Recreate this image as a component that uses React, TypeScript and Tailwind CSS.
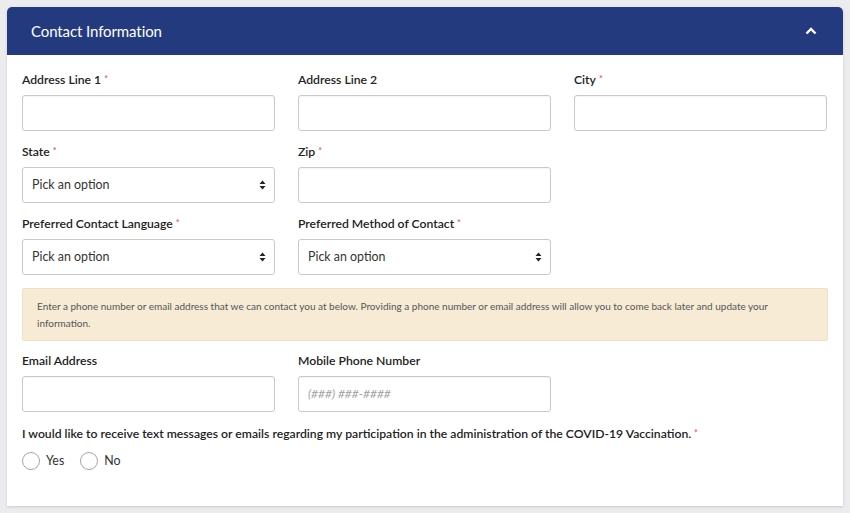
import React from "react";

const font = { fontFamily: "Lato, 'Noto Sans', sans-serif" };

function Req() {
  return <span className="text-[#e05a5a] text-[9px] align-top ml-[3px] relative top-[-1px]">*</span>;
}

function Label({ children, req }: { children: React.ReactNode; req?: boolean }) {
  return (
    <div className="h-[16px] text-[12.2px] leading-[16px] font-semibold text-[#222] mb-[7px] whitespace-nowrap">
      {children}
      {req && <Req />}
    </div>
  );
}

function Input({ placeholder }: { placeholder?: string }) {
  return (
    <div className="h-[36px] rounded-[3px] border border-[#c9c9c9] bg-white flex items-center px-[9px] shadow-[inset_0_1px_1px_rgba(0,0,0,0.04)]">
      {placeholder && <span className="text-[12px] italic text-[#a0a0a0]">{placeholder}</span>}
    </div>
  );
}

function Select() {
  return (
    <div className="h-[36px] rounded-[3px] border border-[#c9c9c9] bg-white flex items-center justify-between pl-[9px] pr-[8px]">
      <span className="text-[12.4px] text-[#333]">Pick an option</span>
      <svg width="7" height="10" viewBox="0 0 7 10">
        <path d="M3.5 0.5 L6.5 4 H0.5 Z" fill="#222" />
        <path d="M3.5 9.5 L6.5 6 H0.5 Z" fill="#222" />
      </svg>
    </div>
  );
}

function Field({ label, req, children }: { label: string; req?: boolean; children: React.ReactNode }) {
  return (
    <div className="flex flex-col">
      <Label req={req}>{label}</Label>
      {children}
    </div>
  );
}

function Radio({ label }: { label: string }) {
  return (
    <div className="flex items-center gap-[6px]">
      <div className="w-[18px] h-[18px] rounded-full border border-[#a5a5a5] bg-white" />
      <span className="text-[12.4px] text-[#333]">{label}</span>
    </div>
  );
}

export default function App() {
  return (
    <div className="w-[850px] h-[513px] bg-[#ececef] pt-[7px] pl-[7px] pr-[7px]" style={font}>
      <div className="bg-white rounded-t-[5px] shadow-[0_1px_3px_rgba(0,0,0,0.15)] h-[499px]">
        <div className="h-[48px] bg-[#233a7f] rounded-t-[5px] flex items-center justify-between pl-[24px] pr-[26px]">
          <span className="text-white text-[15px] tracking-[-0.1px]">Contact Information</span>
          <svg width="12" height="8" viewBox="0 0 12 8">
            <path d="M1.5 6.5 L6 2 L10.5 6.5" stroke="white" strokeWidth="2.4" fill="none" />
          </svg>
        </div>
        <div className="px-[15px] pt-[17px]">
          <div className="grid grid-cols-[253px_253px_253px] gap-x-[23px] gap-y-[13px]">
            <Field label="Address Line 1" req><Input /></Field>
            <Field label="Address Line 2"><Input /></Field>
            <Field label="City" req><Input /></Field>
            <Field label="State" req><Select /></Field>
            <Field label="Zip" req><Input /></Field>
            <div />
            <Field label="Preferred Contact Language" req><Select /></Field>
            <Field label="Preferred Method of Contact" req><Select /></Field>
            <div />
          </div>
          <div className="mt-[13px] h-[53px] bg-[#f7ebd6] border border-[#efe1c6] rounded-[2px] pl-[14px] pr-[10px] pt-[9px] text-[10px] leading-[17px] text-[#555]">
            Enter a phone number or email address that we can contact you at below. Providing a phone number or email address will allow you to come back later and update your
            <br />
            information.
          </div>
          <div className="mt-[12px] grid grid-cols-[253px_253px_253px] gap-x-[23px]">
            <Field label="Email Address"><Input /></Field>
            <Field label="Mobile Phone Number"><Input placeholder="(###) ###-####" /></Field>
          </div>
          <div className="mt-[14px]">
            <Label req>I would like to receive text messages or emails regarding my participation in the administration of the COVID-19 Vaccination.</Label>
          </div>
          <div className="flex gap-[16px] mt-[10px]">
            <Radio label="Yes" />
            <Radio label="No" />
          </div>
        </div>
      </div>
    </div>
  );
}
